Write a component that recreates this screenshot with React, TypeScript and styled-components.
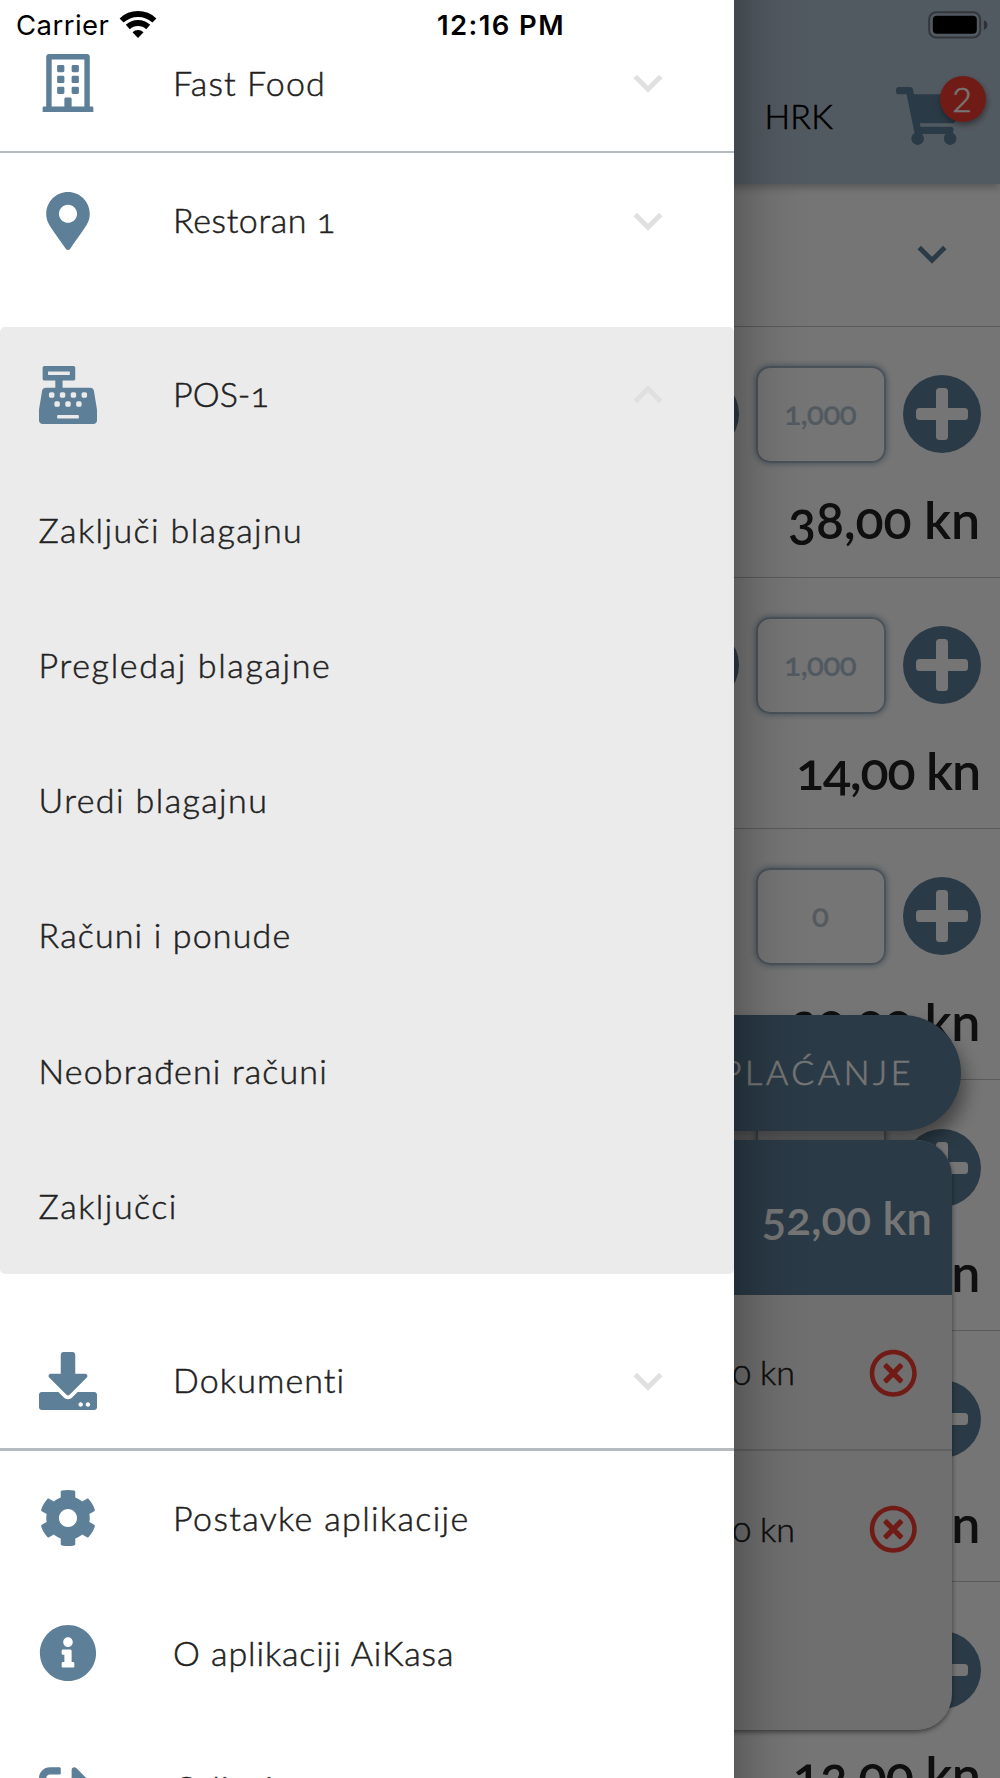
import React from 'react';
import styled, { createGlobalStyle } from 'styled-components';
import {
  FaRegBuilding,
  FaMapMarkerAlt,
  FaCashRegister,
  FaDownload,
  FaCog,
  FaInfoCircle,
  FaSignOutAlt,
  FaShoppingCart,
  FaRegTimesCircle,
} from 'react-icons/fa';

const color = {
  primary: '#5d7f98',
  bar: '#b4c4d3',
  line: '#b5bbbf',
  text: '#212121',
  danger: '#f73c30',
};

const GlobalStyle = createGlobalStyle`
  *, *::before, *::after { box-sizing: border-box; }
  body {
    margin: 0;
    background: #fff;
    color: ${color.text};
    font-family: Lato, 'Open Sans', sans-serif;
    font-variant-numeric: oldstyle-nums;
  }
  svg { display: block; flex: none; }
`;

const Screen = styled.div`
  position: relative;
  width: 1000px;
  height: 1778px;
  overflow: hidden;
  background: #fff;
`;

/* ---------- Catalogue behind the drawer ---------- */

const AppBar = styled.header`
  position: relative;
  display: flex;
  align-items: center;
  justify-content: flex-end;
  height: 183.5px;
  padding: 48.5px 39px 0 0;
  background: ${color.bar};
  box-shadow: 0 3px 9px rgba(0, 0, 0, 0.28);
`;

const Currency = styled.span`
  margin-right: 63px;
  padding-bottom: 2px;
  font-size: 34px;
  font-weight: 300;
  letter-spacing: 0.2px;
  color: #000;
  -webkit-text-stroke: 0.6px #000;
`;

const CartButton = styled.div`
  position: relative;
  color: ${color.primary};
`;

const CartBadge = styled.span`
  position: absolute;
  top: -11px;
  right: -24.5px;
  display: flex;
  align-items: center;
  justify-content: center;
  width: 46px;
  height: 46px;
  padding-right: 1px;
  border-radius: 50%;
  background: ${color.danger};
  color: #fff;
  font-size: 34px;
  font-weight: 300;
  font-variant-numeric: lining-nums;
  line-height: 44px;
  -webkit-text-stroke: 0.6px #fff;
  box-shadow: 1px 3px 6px rgba(0, 0, 0, 0.4);
`;

const CategorySelect = styled.div`
  display: flex;
  align-items: center;
  justify-content: flex-end;
  height: 143px;
  padding: 0 38.6px 1px 0;
  border-bottom: 1.2px solid #c4c4c4;
  color: ${color.primary};
`;

const Product = styled.section`
  display: flex;
  flex-direction: column;
  align-items: flex-end;
  height: 251.2px;
  padding: 39px 19px 0 0;
  border-bottom: 1.2px solid #c4c4c4;
`;

const Stepper = styled.div`
  display: flex;
  align-items: center;
  gap: 17px;
`;

const Quantity = styled.div<{ $dim?: boolean }>`
  display: flex;
  align-items: center;
  justify-content: center;
  width: 130px;
  height: 97px;
  padding: 0 2px 3px 0;
  border: 2.4px solid #a2b4c4;
  border-radius: 14px;
  box-shadow: 0 0 7px #8ba3b6;
  color: ${(p) => (p.$dim ? '#b9c4cd' : '#b4c4d3')};
  font-size: 32px;
  font-weight: 600;
  letter-spacing: -0.9px;
`;

const Price = styled.div<{ $track: number }>`
  margin: 25px 0 0;
  padding-right: 1px;
  font-size: 52px;
  font-weight: 600;
  line-height: 62px;
  letter-spacing: ${(p) => p.$track}px;
`;

const PayButton = styled.div`
  position: absolute;
  top: 1014.7px;
  right: 39px;
  display: flex;
  align-items: center;
  justify-content: flex-end;
  width: 420px;
  height: 116px;
  padding: 0 47px 2px 0;
  border-radius: 58px;
  background: ${color.primary};
  color: #fff;
  font-size: 34px;
  font-weight: 300;
  letter-spacing: 3.6px;
  -webkit-text-stroke: 0.6px #fff;
  box-shadow: 4px 12px 18px rgba(0, 0, 0, 0.42);
`;

const CartCard = styled.div`
  position: absolute;
  top: 1140px;
  right: 48px;
  width: 904px;
  height: 589.5px;
  overflow: hidden;
  border-radius: 36px;
  background: #f2f2f2;
`;

const CartCardShadow = styled.div`
  position: absolute;
  top: 1140px;
  right: 48px;
  width: 904px;
  height: 589.5px;
  border-radius: 36px;
  box-shadow: 0 2px 5px rgba(0, 0, 0, 0.5);
`;

const CartTotal = styled.div`
  display: flex;
  align-items: center;
  justify-content: flex-end;
  height: 154.7px;
  padding: 1px 20px 0 0;
  background: ${color.primary};
  color: #fff;
  font-size: 46px;
  font-weight: 600;
  letter-spacing: -0.1px;
`;

const CartLine = styled.div`
  display: flex;
  align-items: center;
  justify-content: flex-end;
  gap: 74px;
  height: 154.5px;
  padding: 2px 34.5px 0 0;
  font-size: 34px;
  font-weight: 300;
  -webkit-text-stroke: 0.5px ${color.text};

  & + & {
    height: 157px;
    border-top: 2px solid #cfcfcf;
  }

  svg {
    color: ${color.danger};
  }
`;

const Amount = styled.span`
  padding-bottom: 3px;
`;

const Scrim = styled.div`
  position: absolute;
  inset: 0;
  background: rgba(0, 0, 0, 0.54);
`;

/* ---------- Drawer ---------- */

const Drawer = styled.nav`
  position: absolute;
  top: 0;
  left: 0;
  bottom: 0;
  width: 734px;
  padding-top: 15.5px;
  overflow: hidden;
  background: #fff;
`;

const DrawerShadow = styled.div`
  position: absolute;
  top: -80px;
  left: 0;
  bottom: -80px;
  width: 734px;
  box-shadow: 0 0 62px rgba(0, 0, 0, 0.42);
`;

const Row = styled.div`
  display: flex;
  align-items: center;
  height: 135.27px;
  padding: 0 57.5px 0 38.6px;
`;

const IconSlot = styled.span`
  display: flex;
  justify-content: center;
  width: 58px;
  margin-right: 76.5px;
  color: ${color.primary};
`;

const Label = styled.span<{ $track: number }>`
  flex: 1;
  padding-bottom: 2px;
  font-size: 34px;
  font-weight: 300;
  letter-spacing: ${(p) => p.$track}px;
  white-space: nowrap;
  -webkit-text-stroke: 0.5px ${color.text};
`;

const Group = styled.div`
  margin: 38.8px 0;
  border-radius: 5px;
  background: #ebebeb;
`;

const Divider = styled.div`
  height: 2.4px;
  background: ${color.line};
`;

/* ---------- Status bar ---------- */

const StatusBar = styled.div`
  position: absolute;
  top: 0;
  left: 0;
  right: 0;
  display: grid;
  grid-template-columns: 1fr auto 1fr;
  align-items: center;
  height: 48px;
  padding: 2px 12px 0 16px;
  color: #000;
  font-family: Inter, 'Liberation Sans', sans-serif;
  font-size: 27.5px;
  font-variant-numeric: normal;
`;

const Carrier = styled.div`
  display: flex;
  align-items: center;
  gap: 10px;
  letter-spacing: 0.45px;
`;

const Clock = styled.div`
  padding-right: 2px;
  font-weight: 600;
  letter-spacing: 1.4px;
`;

const BatterySlot = styled.div`
  display: flex;
  justify-content: flex-end;
  padding-bottom: 1px;
`;

const Chevron = ({ up, tint = '#e0e0e0' }: { up?: boolean; tint?: string }) => (
  <svg width="58" height="58" viewBox="0 0 24 24" fill={tint}>
    <path
      d={
        up
          ? 'M12 8l-6 6 1.41 1.41L12 10.83l4.59 4.58L18 14z'
          : 'M16.59 8.59L12 13.17 7.41 8.59 6 10l6 6 6-6z'
      }
    />
  </svg>
);

const RoundButton = ({ minus }: { minus?: boolean }) => (
  <svg width="78" height="78" viewBox="0 0 78 78">
    <circle cx="39" cy="39" r="39" fill={color.primary} />
    <rect x="13" y="33" width="52" height="12" rx="3.5" fill="#fff" />
    {!minus && <rect x="33" y="13" width="12" height="52" rx="3.5" fill="#fff" />}
  </svg>
);

const Wifi = () => (
  <svg width="38" height="28" viewBox="0 0 38 28" fill="none" stroke="#000">
    <path d="M2.6 9.5A24 24 0 0 1 35.4 9.5" strokeWidth="5.8" />
    <path d="M8.8 16A15 15 0 0 1 29.2 16" strokeWidth="5.8" />
    <path d="M19 27L13.5 21.3A8 8 0 0 1 24.5 21.3Z" fill="#000" stroke="none" />
  </svg>
);

const Battery = () => (
  <svg width="60" height="28" viewBox="0 0 60 28">
    <rect x="1.2" y="1.2" width="51" height="25.4" rx="7" fill="none" stroke="#33373b" strokeWidth="2" />
    <rect x="4.8" y="4.8" width="44" height="18" rx="4" fill="#000" />
    <path d="M55.8 9.3a5 5 0 0 1 0 9.6z" fill="#2d3135" />
  </svg>
);

type Item = { id: number; value: string; track: number; minus?: boolean; qty: string };

const products: Item[] = [
  { id: 1, value: '38,00 kn', track: -0.2, minus: true, qty: '1,000' },
  { id: 2, value: '14,00 kn', track: -1.2, minus: true, qty: '1,000' },
  { id: 3, value: '20,00 kn', track: -0.4, qty: '0' },
  { id: 4, value: '12,00 kn', track: -0.4, qty: '0' },
  { id: 5, value: '20,00 kn', track: -0.4, qty: '0' },
  { id: 6, value: '12,00 kn', track: -0.8, qty: '0' },
];

const registerLinks: [string, number][] = [
  ['Zaključi blagajnu', 1.4],
  ['Pregledaj blagajne', 1.65],
  ['Uredi blagajnu', 1.4],
  ['Računi i ponude', 1.15],
  ['Neobrađeni računi', 1.15],
  ['Zaključci', 1.5],
];

type MenuRowProps = {
  icon: React.ReactNode;
  label: string;
  track: number;
  arrow?: 'up' | 'down';
};

const MenuRow = ({ icon, label, track, arrow }: MenuRowProps) => (
  <Row>
    <IconSlot>{icon}</IconSlot>
    <Label $track={track}>{label}</Label>
    {arrow && <Chevron up={arrow === 'up'} />}
  </Row>
);

export default function App() {
  return (
    <Screen>
      <GlobalStyle />

      <AppBar>
        <Currency>HRK</Currency>
        <CartButton>
          <FaShoppingCart size={58} style={{ width: 65 }} />
          <CartBadge>2</CartBadge>
        </CartButton>
      </AppBar>
      <CategorySelect>
        <Chevron tint={color.primary} />
      </CategorySelect>
      {products.map((p) => (
        <Product key={p.id}>
          <Stepper>
            {p.minus && <RoundButton minus />}
            <Quantity $dim={!p.minus}>{p.qty}</Quantity>
            <RoundButton />
          </Stepper>
          <Price $track={p.track}>{p.value}</Price>
        </Product>
      ))}

      <CartCardShadow />
      <PayButton>PLAĆANJE</PayButton>
      <CartCard>
        <CartTotal>52,00 kn</CartTotal>
        <CartLine>
          <Amount>38,00 kn</Amount>
          <FaRegTimesCircle size={48.5} />
        </CartLine>
        <CartLine>
          <Amount>14,00 kn</Amount>
          <FaRegTimesCircle size={48.5} />
        </CartLine>
      </CartCard>

      <Scrim />
      <DrawerShadow />

      <Drawer>
        <MenuRow icon={<FaRegBuilding size={58} />} label="Fast Food" track={1.1} arrow="down" />
        <Divider />
        <MenuRow icon={<FaMapMarkerAlt size={58} />} label="Restoran 1" track={0.6} arrow="down" />
        <Group>
          <MenuRow icon={<FaCashRegister size={58} />} label="POS-1" track={0} arrow="up" />
          {registerLinks.map(([label, track]) => (
            <Row key={label}>
              <Label $track={track}>{label}</Label>
            </Row>
          ))}
        </Group>
        <MenuRow icon={<FaDownload size={58} />} label="Dokumenti" track={1.1} arrow="down" />
        <Divider />
        <MenuRow icon={<FaCog size={58} />} label="Postavke aplikacije" track={1.35} />
        <MenuRow icon={<FaInfoCircle size={58} />} label="O aplikaciji AiKasa" track={0.9} />
        <MenuRow icon={<FaSignOutAlt size={58} />} label="Odjavi" track={1.2} />
      </Drawer>

      <StatusBar>
        <Carrier>
          Carrier
          <Wifi />
        </Carrier>
        <Clock>12:16 PM</Clock>
        <BatterySlot>
          <Battery />
        </BatterySlot>
      </StatusBar>
    </Screen>
  );
}
